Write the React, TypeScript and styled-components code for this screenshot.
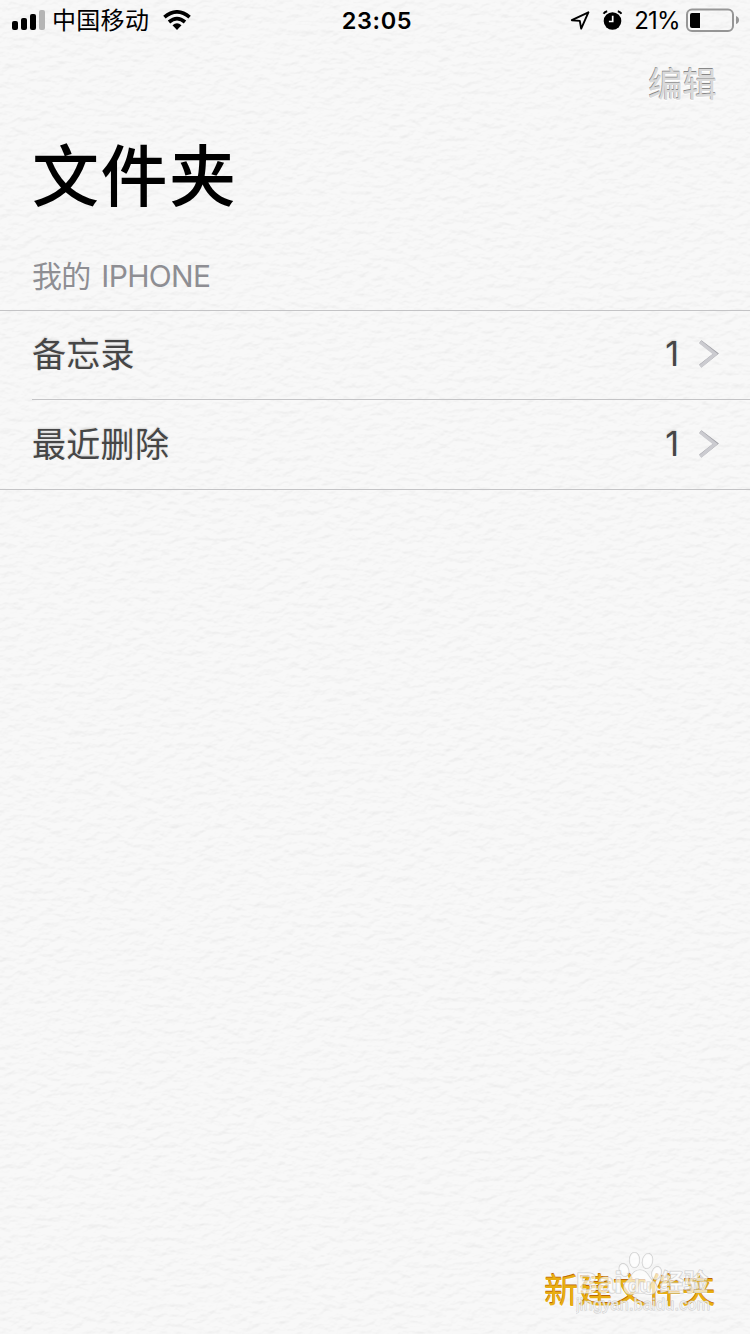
import React from 'react';
import styled, { createGlobalStyle } from 'styled-components';

const GlobalStyle = createGlobalStyle`
  * { box-sizing: border-box; }
  body { margin: 0; background: #f7f7f7; font-family: Inter, 'Noto Sans CJK SC', sans-serif; }
`;

const Screen = styled.div`
  position: relative;
  isolation: isolate;
  display: flex;
  flex-direction: column;
  width: 750px;
  height: 1334px;
  overflow: hidden;
  background: #f7f7f7;
`;

const Paper = styled.svg`
  position: absolute;
  inset: 0;
  z-index: -1;
  opacity: 0.18;
`;

const StatusBar = styled.header`
  display: grid;
  grid-template-columns: 1fr auto 1fr;
  align-items: center;
  height: 40px;
  padding: 0 11px 0 12px;
  color: #000;
  font-size: 24px;
  line-height: 40px;
`;

const StatusGroup = styled.div<{ $end?: boolean }>`
  display: flex;
  align-items: center;
  justify-content: ${(p) => (p.$end ? 'flex-end' : 'flex-start')};
  svg { display: block; flex: none; margin-bottom: 1px; }
`;

const Carrier = styled.span`
  margin: 0 14px 0 7px;
  letter-spacing: 0.3px;
`;

const Clock = styled.time`
  font-size: 23.5px;
  font-weight: 600;
  letter-spacing: 0.6px;
  padding: 1px 0 0 3px;
`;

const Percent = styled.span`
  margin: 1px 6px 0 12px;
  font-size: 24px;
  letter-spacing: -0.7px;
`;

const NavBar = styled.nav`
  display: flex;
  justify-content: flex-end;
  align-items: center;
  height: 88px;
  padding: 0 33px 4px;
`;

const Button = styled.button<{ $tone: 'disabled' | 'gold' }>`
  padding: 0;
  border: 0;
  background: none;
  font: 400 34.4px/48px 'Noto Sans CJK SC', sans-serif;
  color: ${(p) => (p.$tone === 'gold' ? '#e8ae12' : '#d9d9d9')};
  -webkit-text-stroke: 0.2px ${(p) => (p.$tone === 'gold' ? '#e8ae12' : '#d9d9d9')};
  text-shadow: ${(p) =>
    p.$tone === 'gold' ? '-0.4px -0.8px 0 #bd6508, 0 1px 1px #fff' : '-0.5px -0.8px 0 #888, 0 1px 1px #fff'};
`;

const Title = styled.h1`
  height: 112px;
  margin: -4px 0 0;
  padding-left: 32px;
  font: 500 67px/96px 'Noto Sans CJK SC', sans-serif;
  letter-spacing: 1.5px;
  color: #000;
`;

const SectionLabel = styled.h2`
  height: 74px;
  margin: 0;
  padding: 17px 32px 0;
  font-size: 30px;
  font-weight: 400;
  line-height: 46px;
  letter-spacing: -0.7px;
  word-spacing: 3px;
  color: #8e8e93;
`;

const FolderList = styled.ul`
  margin: 0;
  padding: 0;
  list-style: none;
  border: solid #c4c4c6;
  border-width: 1px 0;
`;

const FolderRow = styled.li`
  padding-left: 32px;
  & + & > div { border-top: 1px solid #c4c4c6; height: 90px; }
`;

const RowBody = styled.div`
  display: flex;
  align-items: center;
  height: 88px;
  padding: 0 30px 2px 0;
  color: #464646;
  font-size: 34px;
  text-shadow: 0 -1px 2px rgba(0, 0, 0, 0.16);
`;

const FolderName = styled.span`
  flex: 1;
  padding-top: 2px;
  line-height: 48px;
  letter-spacing: 0.3px;
`;

const Count = styled.span`
  margin-right: 19px;
  line-height: 48px;
`;

const BottomBar = styled.footer`
  position: relative;
  display: flex;
  justify-content: flex-end;
  align-items: center;
  height: 88px;
  margin-top: auto;
  padding: 0 34px 4px 0;
`;

const Watermark = styled.svg`
  position: absolute;
  right: 32px;
  top: 2px;
`;

const Chevron = () => (
  <svg width="22" height="30" viewBox="0 0 22 30" fill="none">
    <path d="M2.3 2.6 18 14.6 2.3 27" stroke="#a2a2a8" strokeWidth="3.6" />
    <path d="M2.3 3.2 17.2 15 2.3 27.5" stroke="#cbcbd0" strokeWidth="3.4" />
  </svg>
);

const folders = [
  { name: '备忘录', count: 1 },
  { name: '最近删除', count: 1 },
];

export default function App() {
  return (
    <Screen>
      <GlobalStyle />
      <Paper width="750" height="1334" aria-hidden="true">
        <filter id="grain" x="0" y="0" width="100%" height="100%" colorInterpolationFilters="sRGB">
          <feTurbulence type="fractalNoise" baseFrequency="0.09 0.15" numOctaves="4" seed="8" />
          <feDiffuseLighting surfaceScale="0.9" diffuseConstant="1.13" lightingColor="#fff">
            <feDistantLight azimuth="255" elevation="60" />
          </feDiffuseLighting>
        </filter>
        <rect width="750" height="1334" filter="url(#grain)" />
      </Paper>

      <StatusBar>
        <StatusGroup>
          <svg width="33" height="20" viewBox="0 0 33 20">
            <rect x="0" y="11" width="6" height="9" rx="2" />
            <rect x="9" y="8" width="6" height="12" rx="2" />
            <rect x="18" y="4" width="6" height="16" rx="2" />
            <rect x="27" y="0" width="6" height="20" rx="2" fill="#b5b5b5" />
          </svg>
          <Carrier>中国移动</Carrier>
          <svg width="28" height="20" viewBox="0 0 28 20" fill="none" stroke="#000" strokeWidth="3.7">
            <path d="M1.4 7.1Q14-3.3 26.6 7.1" />
            <path d="M6 12Q14 5.4 22 12" />
            <path d="M9.5 15.2Q14 11.4 18.5 15.2L14 20Z" fill="#000" stroke="none" />
          </svg>
        </StatusGroup>
        <Clock>23:05</Clock>
        <StatusGroup $end>
          <svg width="20" height="20" viewBox="0 0 20 20" fill="none" stroke="#000" strokeWidth="1.9" strokeLinejoin="round">
            <path d="M1.8 10.2 18.4 2.3 11.2 18.6 9.8 10.9Z" />
          </svg>
          <svg width="32" height="20" viewBox="-12.5 0 32 20">
            <circle cx="10" cy="11" r="8.8" />
            <path d="M1.1 3.8Q2.3 1.6 4.7 1.2M15.3 1.2Q17.7 1.6 18.9 3.8" fill="none" stroke="#000" strokeWidth="2" />
            <path d="M10.2 5.8V11.5H6.4" fill="none" stroke="#fff" strokeWidth="1.7" />
          </svg>
          <Percent>21%</Percent>
          <svg width="53" height="24" viewBox="0 0 53 24">
            <rect x="1" y="1.5" width="46" height="21.5" rx="5" fill="none" stroke="#969696" strokeWidth="2" />
            <path d="M6 5H14V20H6Q4 20 4 18V7Q4 5 6 5Z" />
            <path d="M50 8Q53 9 53 12T50 16Z" fill="#969696" />
          </svg>
        </StatusGroup>
      </StatusBar>

      <NavBar>
        <Button $tone="disabled">编辑</Button>
      </NavBar>
      <Title>文件夹</Title>
      <SectionLabel>我的 IPHONE</SectionLabel>
      <FolderList>
        {folders.map((folder) => (
          <FolderRow key={folder.name}>
            <RowBody>
              <FolderName>{folder.name}</FolderName>
              <Count>{folder.count}</Count>
              <Chevron />
            </RowBody>
          </FolderRow>
        ))}
      </FolderList>

      <BottomBar>
        <Button $tone="gold">新建文件夹</Button>
        <Watermark width="142" height="70" viewBox="0 0 142 70" fill="#fff" fillOpacity="0.65" stroke="#c0c0c0" strokeOpacity="0.75" strokeWidth="1.2" paintOrder="stroke">
          <ellipse cx="48" cy="22" rx="4.5" ry="6.5" transform="rotate(-20 48 22)" />
          <ellipse cx="58.5" cy="12" rx="5" ry="7.5" />
          <ellipse cx="71.5" cy="13" rx="5" ry="7.5" transform="rotate(12 71.5 13)" />
          <ellipse cx="80.5" cy="25" rx="4.5" ry="6.5" transform="rotate(20 80.5 25)" />
          <path d="M64 22C56 22 56 29 51 33C45 38 48 48 57 46Q64 44 71 46C81 48 84 38 77 33C72 29 72 22 64 22Z" />
          <text x="0" y="45" fontFamily="Liberation Sans" fontWeight="700" fontSize="30">Bai</text>
          <text x="52" y="44" fontFamily="Liberation Sans" fontWeight="700" fontSize="19">du</text>
          <text x="84" y="43" fontFamily="Noto Sans CJK SC" fontWeight="700" fontSize="24">经验</text>
          <text x="0" y="62" fontFamily="Liberation Sans" fontSize="16" textLength="134" strokeWidth="1">jingyan.baidu.com</text>
        </Watermark>
      </BottomBar>
    </Screen>
  );
}
